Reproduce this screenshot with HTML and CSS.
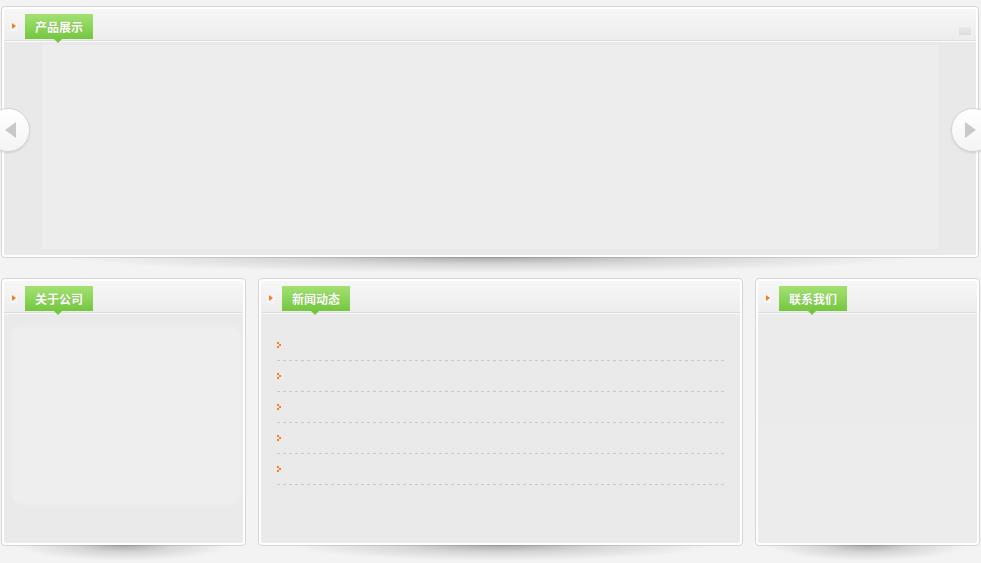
FILE: index.html
```html
<!DOCTYPE html>
<html lang="zh-CN">
<head>
<meta charset="utf-8">
<title>首页</title>
<link rel="stylesheet" href="styles.css">
</head>
<body>
<div class="page">
  <section class="panel panel-top">
    <div class="panel-inner">
      <div class="panel-head">
        <span class="mark"></span>
        <h2 class="tab">产品展示</h2>
        <span class="more"></span>
      </div>
      <div class="panel-body slider">
        <div class="slide-area"></div>
      </div>
    </div>
    <button class="arrow arrow-left" aria-label="上一个">
      <svg width="12" height="16" viewBox="0 0 12 16"><path d="M11 0 L0 8 L11 16 Z" fill="#c9c9c9"/></svg>
    </button>
    <button class="arrow arrow-right" aria-label="下一个">
      <svg width="12" height="16" viewBox="0 0 12 16"><path d="M1 0 L12 8 L1 16 Z" fill="#c9c9c9"/></svg>
    </button>
  </section>

  <div class="row">
    <section class="panel panel-about">
      <div class="panel-inner">
        <div class="panel-head">
          <span class="mark"></span>
          <h2 class="tab">关于公司</h2>
        </div>
        <div class="panel-body about-body">
          <div class="about-area"></div>
        </div>
      </div>
    </section>

    <section class="panel panel-news">
      <div class="panel-inner">
        <div class="panel-head">
          <span class="mark"></span>
          <h2 class="tab">新闻动态</h2>
        </div>
        <div class="panel-body news-body">
          <ul class="news-list">
            <li class="news-item"><svg class="bullet" width="4" height="6" viewBox="0 0 4 6"><path d="M0 0h2v2H0zM2 2h2v2H2zM0 4h2v2H0z" fill="#ff7a22"/></svg></li>
            <li class="news-item"><svg class="bullet" width="4" height="6" viewBox="0 0 4 6"><path d="M0 0h2v2H0zM2 2h2v2H2zM0 4h2v2H0z" fill="#ff7a22"/></svg></li>
            <li class="news-item"><svg class="bullet" width="4" height="6" viewBox="0 0 4 6"><path d="M0 0h2v2H0zM2 2h2v2H2zM0 4h2v2H0z" fill="#ff7a22"/></svg></li>
            <li class="news-item"><svg class="bullet" width="4" height="6" viewBox="0 0 4 6"><path d="M0 0h2v2H0zM2 2h2v2H2zM0 4h2v2H0z" fill="#ff7a22"/></svg></li>
            <li class="news-item"><svg class="bullet" width="4" height="6" viewBox="0 0 4 6"><path d="M0 0h2v2H0zM2 2h2v2H2zM0 4h2v2H0z" fill="#ff7a22"/></svg></li>
          </ul>
        </div>
      </div>
    </section>

    <section class="panel panel-contact">
      <div class="panel-inner">
        <div class="panel-head">
          <span class="mark"></span>
          <h2 class="tab">联系我们</h2>
        </div>
        <div class="panel-body contact-body"></div>
      </div>
    </section>
  </div>
</div>
</body>
</html>
```

FILE: styles.css
```css
* { box-sizing: border-box; }

html, body {
  margin: 0;
  padding: 0;
  background: #f3f3f3;
  font-family: "Noto Sans CJK SC", "Noto Sans", sans-serif;
  overflow: hidden;
}

.page {
  width: 981px;
  height: 563px;
  padding: 6px 2px 0 1px;
}

.panel {
  position: relative;
  border: 1px solid #d5d5d5;
  border-radius: 4px;
  background: #fff;
  padding: 2px;
}

.panel::after {
  content: "";
  position: absolute;
  left: 6%;
  right: 6%;
  top: 100%;
  height: 16px;
  background: radial-gradient(ellipse 50% 100% at 50% 0%, rgba(0,0,0,0.30) 0%, rgba(0,0,0,0.12) 45%, rgba(0,0,0,0) 100%);
  pointer-events: none;
}

.panel-inner {
  height: 100%;
  display: flex;
  flex-direction: column;
  background: #eaeaea;
  border-radius: 2px;
  overflow: hidden;
}

.panel-head {
  flex: 0 0 auto;
  height: 32px;
  display: flex;
  align-items: flex-start;
  background: linear-gradient(#f7f7f7, #ededed);
  border-bottom: 1px solid #dcdcdc;
  box-shadow: 0 1px 0 #fbfbfb;
  position: relative;
  z-index: 1;
}

.mark {
  width: 7px;
  height: 9px;
  margin: 13px 0 0 6px;
  background: #f6f6f6;
  position: relative;
}

.mark::before {
  content: "";
  position: absolute;
  left: 2px;
  top: 1px;
  border-left: 4px solid #f47a2a;
  border-top: 3px solid transparent;
  border-bottom: 3px solid transparent;
}

.tab {
  position: relative;
  margin: 5px 0 0 8px;
  width: 68px;
  height: 25px;
  line-height: 25px;
  font-size: 12px;
  font-weight: bold;
  color: #fff;
  text-align: center;
  letter-spacing: 0;
  background: linear-gradient(#a2e072 0%, #8fd65c 45%, #74c640 100%);
  text-shadow: 0 0 1px rgba(60, 120, 20, 0.4);
}

.tab::after {
  content: "";
  position: absolute;
  left: 29px;
  bottom: -4px;
  border-top: 4px solid #74c640;
  border-left: 4px solid transparent;
  border-right: 4px solid transparent;
}

.more {
  margin: 18px 5px 0 auto;
  width: 12px;
  height: 8px;
  background: linear-gradient(#e9e9e9, #dcdcdc);
}

.panel-body {
  flex: 1 1 auto;
  border-top: 1px solid #fafafa;
}

/* top slider */
.panel-top {
  height: 252px;
}

.slider {
  padding: 3px 38px 6px 38px;
  background: #e9e9e9;
}

.slide-area {
  height: 100%;
  background: #ededed;
}

.arrow {
  position: absolute;
  top: 101px;
  width: 44px;
  height: 44px;
  padding: 0;
  border: 1px solid #d4d4d4;
  border-radius: 50%;
  background: linear-gradient(#ffffff, #f4f4f4);
  box-shadow: 0 1px 2px rgba(0,0,0,0.12);
  display: flex;
  align-items: center;
  cursor: pointer;
}

.arrow-left {
  left: -16px;
  justify-content: flex-end;
  padding-right: 12px;
}

.arrow-right {
  left: 949px;
  justify-content: flex-start;
  padding-left: 12px;
}

/* bottom row */
.row {
  margin-top: 20px;
  display: grid;
  grid-template-columns: 245px 485px 225px;
  column-gap: 12px;
}

.row .panel {
  height: 268px;
}

.about-body {
  padding: 14px 3px 40px 9px;
}

.about-area {
  height: 100%;
  border-radius: 6px;
  background: #eeeeee;
  box-shadow: 0 0 6px #eeeeee;
}

.news-body {
  padding: 16px 16px 0 16px;
}

.news-list {
  list-style: none;
  margin: 0;
  padding: 0;
}

.news-item {
  height: 31px;
  padding-top: 12px;
  padding-left: 0;
  background: repeating-linear-gradient(to right, #c9c9c9 0 3px, transparent 3px 6px) left bottom / 100% 1px no-repeat;
}

.bullet {
  display: block;
}

.contact-body {
  background: linear-gradient(#ebebeb, #ececec);
}
```
